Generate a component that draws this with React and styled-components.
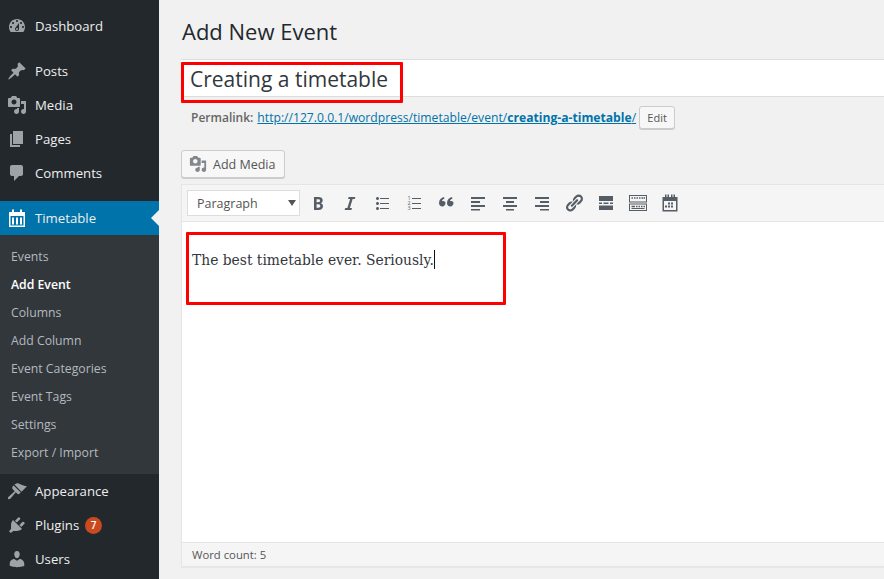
import styled, { createGlobalStyle } from 'styled-components';

const GlobalStyle = createGlobalStyle`
  html, body {
    margin: 0;
    height: 100%;
    overflow: hidden;
    background: #f1f1f1;
    font-family: "Open Sans", "Liberation Sans", sans-serif;
  }
`;

const ICONS = {
  dashboard: 'M3.76 16h12.48c1.1-1.37 1.76-3.11 1.76-5 0-4.42-3.58-8-8-8s-8 3.58-8 8c0 1.89.66 3.63 1.76 5zM10 4c.55 0 1 .45 1 1s-.45 1-1 1-1-.45-1-1 .45-1 1-1zM6 6c.55 0 1 .45 1 1s-.45 1-1 1-1-.45-1-1 .45-1 1-1zm8 0c.55 0 1 .45 1 1s-.45 1-1 1-1-.45-1-1 .45-1 1-1zm-5.37 5.55L12 7v6c0 1.1-.9 2-2 2s-2-.9-2-2c0-.57.24-1.08.63-1.45zM4 10c.55 0 1 .45 1 1s-.45 1-1 1-1-.45-1-1 .45-1 1-1zm12 0c.55 0 1 .45 1 1s-.45 1-1 1-1-.45-1-1 .45-1 1-1zm-5 3c0-.55-.45-1-1-1s-1 .45-1 1 .45 1 1 1 1-.45 1-1z',
  posts: 'M10.44 3.02l1.82-1.82 6.36 6.35-1.83 1.82c-1.05-.68-2.48-.57-3.41.36l-.75.75c-.92.93-1.04 2.35-.35 3.41l-1.83 1.82-2.41-2.41-2.8 2.79c-.42.42-3.38 2.71-3.8 2.29s1.86-3.39 2.28-3.81l2.79-2.79L4.1 9.36l1.83-1.82c1.05.69 2.48.57 3.4-.36l.75-.75c.93-.92 1.05-2.35.36-3.41z',
  media: 'M13 11V4c0-.55-.45-1-1-1h-1.67L9 1H5L3.67 3H2c-.55 0-1 .45-1 1v7c0 .55.45 1 1 1h10c.55 0 1-.45 1-1zM7 4.5c1.38 0 2.5 1.12 2.5 2.5S8.38 9.5 7 9.5 4.5 8.38 4.5 7 5.62 4.5 7 4.5zM14 6h5v10.5c0 1.38-1.12 2.5-2.5 2.5S14 17.88 14 16.5s1.12-2.5 2.5-2.5c.17 0 .34.02.5.05V9h-3V6zm-4 8.05V13h2v3.5c0 1.38-1.12 2.5-2.5 2.5S7 17.88 7 16.5 8.12 14 9.5 14c.17 0 .34.02.5.05z',
  pages: 'M6 15V2h10v13H6zm-1 1h8v2H3V5h2v11z',
  comments: 'M5 2h9c1.1 0 2 .9 2 2v7c0 1.1-.9 2-2 2h-2l-5 5v-5H5c-1.1 0-2-.9-2-2V4c0-1.1.9-2 2-2z',
  timetable: 'M5 1.5h2V4h6V1.5h2V4h3v15H2V4h3V1.5zM3.5 8v9.5h13V8h-13zM5 9.5h2v7H5v-7zm4 0h2v7H9v-7zm4 0h2v7h-2v-7z',
  appearance: 'M7.4 3.6L10 2.2C12 2.2 15 4.5 20 5.2L14.5 10.8zM6.6 4.5L13.8 11.6L12 13C11.4 13.4 10.8 13.3 10.3 12.8L8.8 11.3L3.5 17.5C2.5 18.5 1 18.5.9 17.5C.8 16.8 1.3 16 2.2 15.2L7.7 10.2L6 8.5C5 7.5 5 6 6 5z',
  plugins: 'M13.11 4.36L9.87 7.6 8 5.73l3.24-3.24c.35-.34 1.05-.2 1.56.32.52.51.66 1.21.31 1.55zm-8 1.77l.91-1.12 9.01 9.01-1.19.84c-.71.71-2.63 1.16-3.82 1.16H6.14L4.9 17.26c-.59.59-1.54.59-2.12 0-.59-.58-.59-1.53 0-2.12l1.24-1.24v-3.88c0-1.13.4-3.19 1.09-3.89zm7.26 3.97l3.24-3.24c.34-.35 1.04-.21 1.55.31.52.51.66 1.21.31 1.55l-3.24 3.25z',
  users: 'M10 9.25c-2.27 0-2.73-3.44-2.73-3.44C7 4.02 7.82 2 9.97 2c2.16 0 2.98 2.02 2.71 3.81 0 0-.41 3.44-2.68 3.44zm0 2.57L12.72 10c2.39 0 4.52 2.33 4.52 4.53v2.49s-3.65 1.13-7.24 1.13c-3.65 0-7.24-1.13-7.24-1.13v-2.49c0-2.25 1.94-4.48 4.47-4.48z',
  bold: 'M6 4v13h4.54c1.37 0 2.46-.33 3.26-1 .8-.66 1.2-1.58 1.2-2.77 0-.84-.17-1.51-.51-2.01s-.9-.85-1.67-1.03v-.09c.57-.1 1.02-.4 1.36-.9s.51-1.13.51-1.91c0-1.14-.39-1.98-1.17-2.5C12.75 4.26 11.5 4 9.78 4H6zm2.57 5.15V6.26h1.36c.73 0 1.27.11 1.61.32.34.22.51.58.51 1.07 0 .54-.16.92-.47 1.15s-.82.35-1.51.35h-1.5zm0 2.19h1.6c1.44 0 2.16.53 2.16 1.61 0 .6-.17 1.05-.51 1.34s-.86.43-1.57.43H8.57v-3.38z',
  italic: 'M14.78 6h-2.13l-2.8 9h2.12l-.62 2H4.6l.62-2h2.14l2.8-9H8.03l.62-2h6.75z',
  bullist: 'M5.5 7C4.67 7 4 6.33 4 5.5 4 4.68 4.67 4 5.5 4 6.32 4 7 4.68 7 5.5 7 6.33 6.32 7 5.5 7zM8 5h9v1H8V5zm-2.5 7c-.83 0-1.5-.67-1.5-1.5C4 9.68 4.67 9 5.5 9c.82 0 1.5.68 1.5 1.5 0 .83-.68 1.5-1.5 1.5zM8 10h9v1H8v-1zm-2.5 7c-.83 0-1.5-.67-1.5-1.5 0-.82.67-1.5 1.5-1.5.82 0 1.5.68 1.5 1.5 0 .83-.68 1.5-1.5 1.5zM8 15h9v1H8v-1z',
  quote: 'M9.5 9.8c0 2-1.2 3.7-3.1 3.7-2 0-3.4-1.5-3.4-3.6C3 7 5.2 4.7 8 4l.5 1.5C7 6.2 6.2 7 6 8c1.9-.4 3.5.3 3.5 1.8zm8 0c0 2-1.2 3.7-3.1 3.7-2 0-3.4-1.5-3.4-3.6C11 7 13.2 4.7 16 4l.5 1.5c-1.5.7-2.3 1.5-2.5 2.5 1.9-.4 3.5.3 3.5 1.8z',
  alignleft: 'M3 4h14v2H3V4zm0 4h9v2H3V8zm0 4h14v2H3v-2zm0 4h9v1.5H3V16z',
  aligncenter: 'M3 4h14v2H3V4zm3 4h8v2H6V8zm-3 4h14v2H3v-2zm3 4h8v1.5H6V16z',
  alignright: 'M3 4h14v2H3V4zm5 4h9v2H8V8zm-5 4h14v2H3v-2zm5 4h9v1.5H8V16z',
  link: 'M17.74 2.76c1.68 1.69 1.68 4.41 0 6.1l-1.53 1.52c-1.12 1.12-2.7 1.47-4.14 1.09l2.62-2.61.76-.77.76-.76c.84-.84.84-2.2 0-3.04-.84-.85-2.2-.85-3.04 0l-.77.76-3.38 3.38c-.37-1.44-.02-3.02 1.1-4.14l1.52-1.53c1.69-1.68 4.42-1.68 6.1 0zM8.59 13.43l5.34-5.34c.42-.42.42-1.1 0-1.52-.44-.43-1.13-.39-1.53 0l-5.33 5.34c-.42.42-.42 1.1 0 1.52.44.43 1.13.39 1.52 0zm-.76 2.29l4.14-4.15c.38 1.44.03 3.02-1.09 4.14l-1.52 1.53c-1.69 1.68-4.41 1.68-6.1 0-1.68-1.68-1.68-4.42 0-6.1l1.53-1.52c1.12-1.12 2.7-1.47 4.14-1.1l-4.14 4.15c-.85.84-.85 2.2 0 3.05.84.84 2.2.84 3.04 0z',
  more: 'M3 3h14v5H3V3zm0 6.5h3V11H3V9.5zm4.5 0h5V11h-5V9.5zm6.5 0h3V11h-3V9.5zM3 12.5h14V17H3v-4.5z',
  toggle: 'M1 2h18v7.5H1V2zm1 1v5.5h16V3H2zm1.5 1.2H5v1.5H3.5V4.2zm2.5 0h1.5v1.5H6V4.2zm2.5 0H10v1.5H8.5V4.2zm2.5 0h1.5v1.5H11V4.2zm2.5 0H15v1.5h-1.5V4.2zm2 0H17v1.5h-1.5V4.2zM1 10.5h18V18H1v-7.5zm1 1V17h16v-5.5H2zm1.5 1.2H7v1.5H3.5v-1.5zm4.5 0h1.5v1.5H8v-1.5zm2.5 0H12v1.5h-1.5v-1.5zm2.5 0h1.5v1.5H13v-1.5zm2.5 0H17v1.5h-1.5v-1.5zM3.5 15h13v1h-13v-1z',
  calendar: 'M5 1.5h1.5V4h1V1.5H9V4h2V1.5h1.5V4h1V1.5H15V4h2.5v14.5h-15V4H5V1.5zM4 8v9h12V8H4zm4 1.5h2v2H8v-2zm3 0h2v2h-2v-2zm-6 3h2v2H5v-2zm3 0h2v2H8v-2zm3 0h2v2h-2v-2z',
};

const MENU_TOP = [{ icon: 'dashboard', label: 'Dashboard' }];

const MENU_CONTENT = [
  { icon: 'posts', label: 'Posts' },
  { icon: 'media', label: 'Media' },
  { icon: 'pages', label: 'Pages' },
  { icon: 'comments', label: 'Comments' },
];

const SUBMENU = [
  'Events',
  'Add Event',
  'Columns',
  'Add Column',
  'Event Categories',
  'Event Tags',
  'Settings',
  'Export / Import',
];

const MENU_BOTTOM = [
  { icon: 'appearance', label: 'Appearance' },
  { icon: 'plugins', label: 'Plugins', badge: 7 },
  { icon: 'users', label: 'Users' },
];

const Layout = styled.div`
  display: flex;
  width: 884px;
  height: 579px;
  overflow: hidden;
`;

const Sidebar = styled.nav`
  background: #23282d;
  box-sizing: border-box;
  flex: 0 0 159px;
  padding-top: 9px;
`;

const Separator = styled.div`
  height: 11px;
`;

const MenuItem = styled.div`
  align-items: center;
  background: ${props => (props.$active ? '#0073aa' : 'transparent')};
  color: #eee;
  display: flex;
  font-size: 13.2px;
  height: 34px;
  padding-left: 7px;
  position: relative;
`;

const MenuIcon = styled.svg`
  fill: ${props => (props.$active ? '#fff' : '#9ea3a8')};
  flex: 0 0 20px;
  height: 20px;
  margin-right: 8px;
  width: 20px;
`;

const ActiveArrow = styled.span`
  border-bottom: 8px solid transparent;
  border-right: 8px solid #f1f1f1;
  border-top: 8px solid transparent;
  position: absolute;
  right: 0;
  top: 9px;
`;

const Badge = styled.span`
  background: #ca4a1f;
  border-radius: 50%;
  color: #fff;
  font-size: 10px;
  font-weight: 600;
  height: 17px;
  line-height: 17px;
  margin-left: 6px;
  text-align: center;
  width: 17px;
`;

const Submenu = styled.div`
  background: #32373c;
  padding: 8px 0 7px;
`;

const SubmenuItem = styled.div`
  color: ${props => (props.$current ? '#fff' : '#b4b9be')};
  font-size: 12.25px;
  font-weight: ${props => (props.$current ? 600 : 400)};
  height: 28px;
  line-height: 28px;
  padding-left: 11px;
`;

const Main = styled.main`
  flex: 1;
  min-width: 0;
  padding: 18px 0 0 22px;
  position: relative;
`;

const PageTitle = styled.h1`
  color: #23282d;
  font-size: 22px;
  font-weight: 400;
  height: 28px;
  line-height: 26px;
  margin: 0 0 13px 1px;
`;

const TitleInput = styled.div`
  background: #fff;
  border-bottom: 1px solid #ddd;
  border-top: 1px solid #ddd;
  color: #32373c;
  font-size: 21px;
  height: 36px;
  line-height: 38px;
  padding-left: 9px;
`;

const PermalinkRow = styled.div`
  align-items: center;
  color: #666;
  display: flex;
  font-size: 12px;
  height: 24px;
  margin-top: 8px;
  padding-left: 10px;
`;

const PermalinkLabel = styled.strong`
  font-weight: 600;
  margin-right: 4px;
`;

const PermalinkUrl = styled.a`
  color: #0073aa;
  font-size: 12.15px;
  text-decoration: underline;
  white-space: nowrap;
`;

const Button = styled.button`
  align-items: center;
  background: #f7f7f7;
  border: 1px solid #ccc;
  border-radius: 3px;
  box-shadow: 0 1px 0 #ccc;
  box-sizing: border-box;
  color: #555;
  display: flex;
  font-family: inherit;
  padding: 0;
`;

const EditButton = styled(Button)`
  font-size: 11px;
  height: 23px;
  justify-content: center;
  margin-left: 3px;
  width: 36px;
`;

const MediaButton = styled(Button)`
  font-size: 12.5px;
  height: 28px;
  margin-top: 21px;
  padding-left: 7px;
  width: 104px;
`;

const MediaIcon = styled.svg`
  fill: #82878c;
  height: 18px;
  margin-right: 6px;
  width: 18px;
`;

const Editor = styled.section`
  background: #fff;
  border: 1px solid #e5e5e5;
  border-right: 0;
  box-shadow: 0 1px 1px rgba(0, 0, 0, 0.04);
  display: flex;
  flex-direction: column;
  height: 381px;
  margin-top: 6px;
`;

const Toolbar = styled.div`
  align-items: center;
  background: #f5f5f5;
  border-bottom: 1px solid #e5e5e5;
  display: flex;
  flex: 0 0 36px;
  padding-left: 5px;
`;

const FormatSelect = styled.div`
  align-items: center;
  background: #fff;
  border: 1px solid #ddd;
  box-sizing: border-box;
  color: #555;
  display: flex;
  font-size: 12.5px;
  height: 26px;
  justify-content: space-between;
  margin-right: 2px;
  padding: 0 2px 0 9px;
  width: 113px;
`;

const SelectCaret = styled.span`
  border-left: 4px solid transparent;
  border-right: 4px solid transparent;
  border-top: 6px solid #555;
  margin-right: 1px;
`;

const ToolButton = styled.span`
  align-items: center;
  display: flex;
  flex: 0 0 32px;
  height: 26px;
  justify-content: center;
`;

const ToolIcon = styled.svg`
  fill: #555d66;
  height: 20px;
  width: 20px;
`;

const OrderedNumber = styled.text`
  fill: #555d66;
  font-family: "Open Sans", sans-serif;
  font-size: 5.5px;
`;

const Content = styled.div`
  color: #32373c;
  flex: 1;
  font-family: "DejaVu Serif", "Liberation Serif", serif;
  font-size: 13.85px;
  line-height: 24px;
  padding: 26px 0 0 10px;
`;

const Caret = styled.span`
  border-left: 1px solid #111;
  display: inline-block;
  height: 19px;
  vertical-align: -4px;
`;

const StatusBar = styled.div`
  background: #f5f5f5;
  border-top: 1px solid #e5e5e5;
  color: #555;
  flex: 0 0 21px;
  font-size: 11.3px;
  line-height: 23px;
  padding-left: 10px;
`;

const Highlight = styled.div`
  border: 3px solid #f00;
  border-radius: 1px;
  box-sizing: border-box;
  height: ${props => props.$height}px;
  left: ${props => props.$left}px;
  pointer-events: none;
  position: absolute;
  top: ${props => props.$top}px;
  width: ${props => props.$width}px;
`;

const SideLink = ({ icon, label, active, badge }) => (
  <MenuItem $active={active}>
    <MenuIcon $active={active} viewBox="0 0 20 20">
      <path d={ICONS[icon]} />
    </MenuIcon>
    {label}
    {badge && <Badge>{badge}</Badge>}
    {active && <ActiveArrow />}
  </MenuItem>
);

const Tool = ({ name }) => (
  <ToolButton>
    <ToolIcon viewBox="0 0 20 20">
      <path d={ICONS[name]} />
    </ToolIcon>
  </ToolButton>
);

const OrderedListTool = () => (
  <ToolButton>
    <ToolIcon viewBox="0 0 20 20">
      <OrderedNumber x="3.5" y="7">1</OrderedNumber>
      <OrderedNumber x="3.5" y="12">2</OrderedNumber>
      <OrderedNumber x="3.5" y="17">3</OrderedNumber>
      <path d="M8 5h9v1H8V5zm0 5h9v1H8v-1zm0 5h9v1H8v-1z" />
    </ToolIcon>
  </ToolButton>
);

const App = () => (
  <Layout>
    <GlobalStyle />
    <Sidebar>
      {MENU_TOP.map(item => <SideLink key={item.label} {...item} />)}
      <Separator />
      {MENU_CONTENT.map(item => <SideLink key={item.label} {...item} />)}
      <Separator />
      <SideLink icon="timetable" label="Timetable" active />
      <Submenu>
        {SUBMENU.map(label => (
          <SubmenuItem key={label} $current={label === 'Add Event'}>{label}</SubmenuItem>
        ))}
      </Submenu>
      {MENU_BOTTOM.map(item => <SideLink key={item.label} {...item} />)}
    </Sidebar>
    <Main>
      <PageTitle>Add New Event</PageTitle>
      <TitleInput>Creating a timetable</TitleInput>
      <PermalinkRow>
        <PermalinkLabel>Permalink:</PermalinkLabel>
        <PermalinkUrl>
          http://127.0.0.1/wordpress/timetable/event/<strong>creating-a-timetable</strong>/
        </PermalinkUrl>
        <EditButton>Edit</EditButton>
      </PermalinkRow>
      <MediaButton>
        <MediaIcon viewBox="0 0 20 20">
          <path d={ICONS.media} />
        </MediaIcon>
        Add Media
      </MediaButton>
      <Editor>
        <Toolbar>
          <FormatSelect>
            Paragraph
            <SelectCaret />
          </FormatSelect>
          <Tool name="bold" />
          <Tool name="italic" />
          <Tool name="bullist" />
          <OrderedListTool />
          <Tool name="quote" />
          <Tool name="alignleft" />
          <Tool name="aligncenter" />
          <Tool name="alignright" />
          <Tool name="link" />
          <Tool name="more" />
          <Tool name="toggle" />
          <Tool name="calendar" />
        </Toolbar>
        <Content>
          The best timetable ever. Seriously.<Caret />
        </Content>
        <StatusBar>Word count: 5</StatusBar>
      </Editor>
      <Highlight $left={22} $top={62} $width={222} $height={41} />
      <Highlight $left={27} $top={232} $width={320} $height={73} />
    </Main>
  </Layout>
);

export default App;
